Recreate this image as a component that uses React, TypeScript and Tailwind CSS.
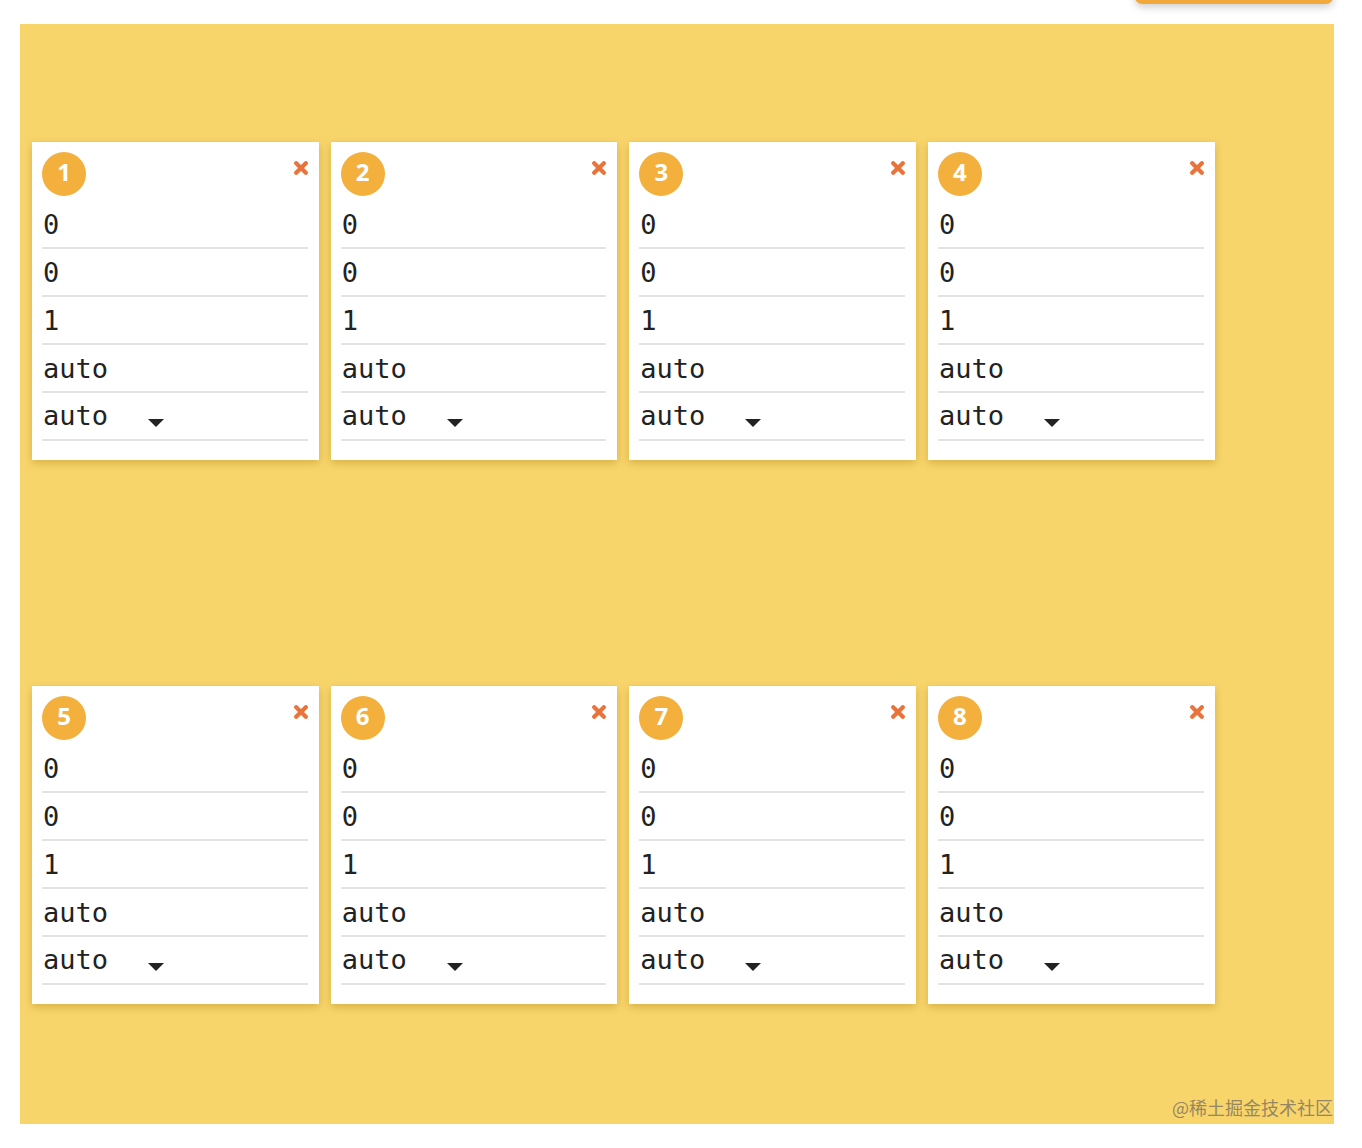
import { useState } from "react";

type Item = { id: number; values: string[]; align: string };

const initialItems: Item[] = Array.from({ length: 8 }, (_, i) => ({
  id: i + 1,
  values: ["0", "0", "1", "auto"],
  align: "auto",
}));

const CloseIcon = () => (
  <svg width="14" height="14" viewBox="0 0 14 14" className="block">
    <path d="M2.2 2.2 L11.8 11.8 M11.8 2.2 L2.2 11.8" stroke="#E8743B" strokeWidth="4.2" strokeLinecap="round" />
  </svg>
);

const Caret = () => (
  <svg width="16" height="8" viewBox="0 0 16 8" className="block">
    <path d="M0 0 H16 L8 8 Z" fill="#222" />
  </svg>
);

const FlexItemCard = ({ item, onRemove }: { item: Item; onRemove: () => void }) => {
  return (
    <div className="w-[286.67px] h-[318px] bg-white pt-[10px] pl-[10px] pr-[11px] pb-[19px] shadow-[0_3px_8px_rgba(150,110,0,0.35)]">
      {/* header: order badge + remove */}
      <div className="flex items-start justify-between h-[44px] mb-[5px]">
        <div className="w-[44px] h-[44px] rounded-full bg-[#F3B03D] text-white flex items-center justify-center text-[24px] font-bold leading-none font-['Open_Sans',sans-serif] pb-[4px]">
          {item.id}
        </div>
        <button onClick={onRemove} className="mt-[9px] cursor-pointer">
          <CloseIcon />
        </button>
      </div>

      {/* order / grow / shrink / basis inputs */}
      {item.values.map((v, idx) => (
        <div
          key={idx}
          className="h-[48px] border-b-2 border-[#e3e3e3] flex items-center pl-px pt-[3px] text-[27px] text-[#222] font-['DejaVu_Sans_Mono',monospace]"
        >
          {v}
        </div>
      ))}

      {/* align-self select */}
      <div className="h-[48px] border-b-2 border-[#e3e3e3] flex items-center pl-px text-[27px] text-[#222] font-['DejaVu_Sans_Mono',monospace]">
        <span className="w-[105px]">{item.align}</span>
        <span className="mt-[14px]">
          <Caret />
        </span>
      </div>
    </div>
  );
};

const App = () => {
  const [items, setItems] = useState(initialItems);

  return (
    <div className="relative w-[1362px] h-[1148px] bg-white overflow-hidden">
      {/* add item button, scrolled mostly out of view */}
      <div className="flex justify-end pr-[29px] h-[24px]">
        <button className="w-[198px] h-[44px] -mt-[40px] rounded-[7px] bg-[#F2A93B] shadow-[0_3px_8px_rgba(0,0,0,0.2)]" />
      </div>

      {/* flex container */}
      <div className="ml-[20px] w-[1314px] h-[1100px] bg-[#F8D56B] px-[12px] pt-[118px] flex flex-wrap content-start gap-x-[12px] gap-y-[226px]">
        {items.map((item) => (
          <FlexItemCard
            key={item.id}
            item={item}
            onRemove={() => setItems(items.filter((i) => i.id !== item.id))}
          />
        ))}
      </div>

      <div className="absolute right-[29px] top-[1095px] text-[18px] leading-[24px] text-[#7d7460] opacity-80 font-['Noto_Sans_CJK_SC',sans-serif]">
        @稀土掘金技术社区
      </div>
    </div>
  );
};

export default App;
